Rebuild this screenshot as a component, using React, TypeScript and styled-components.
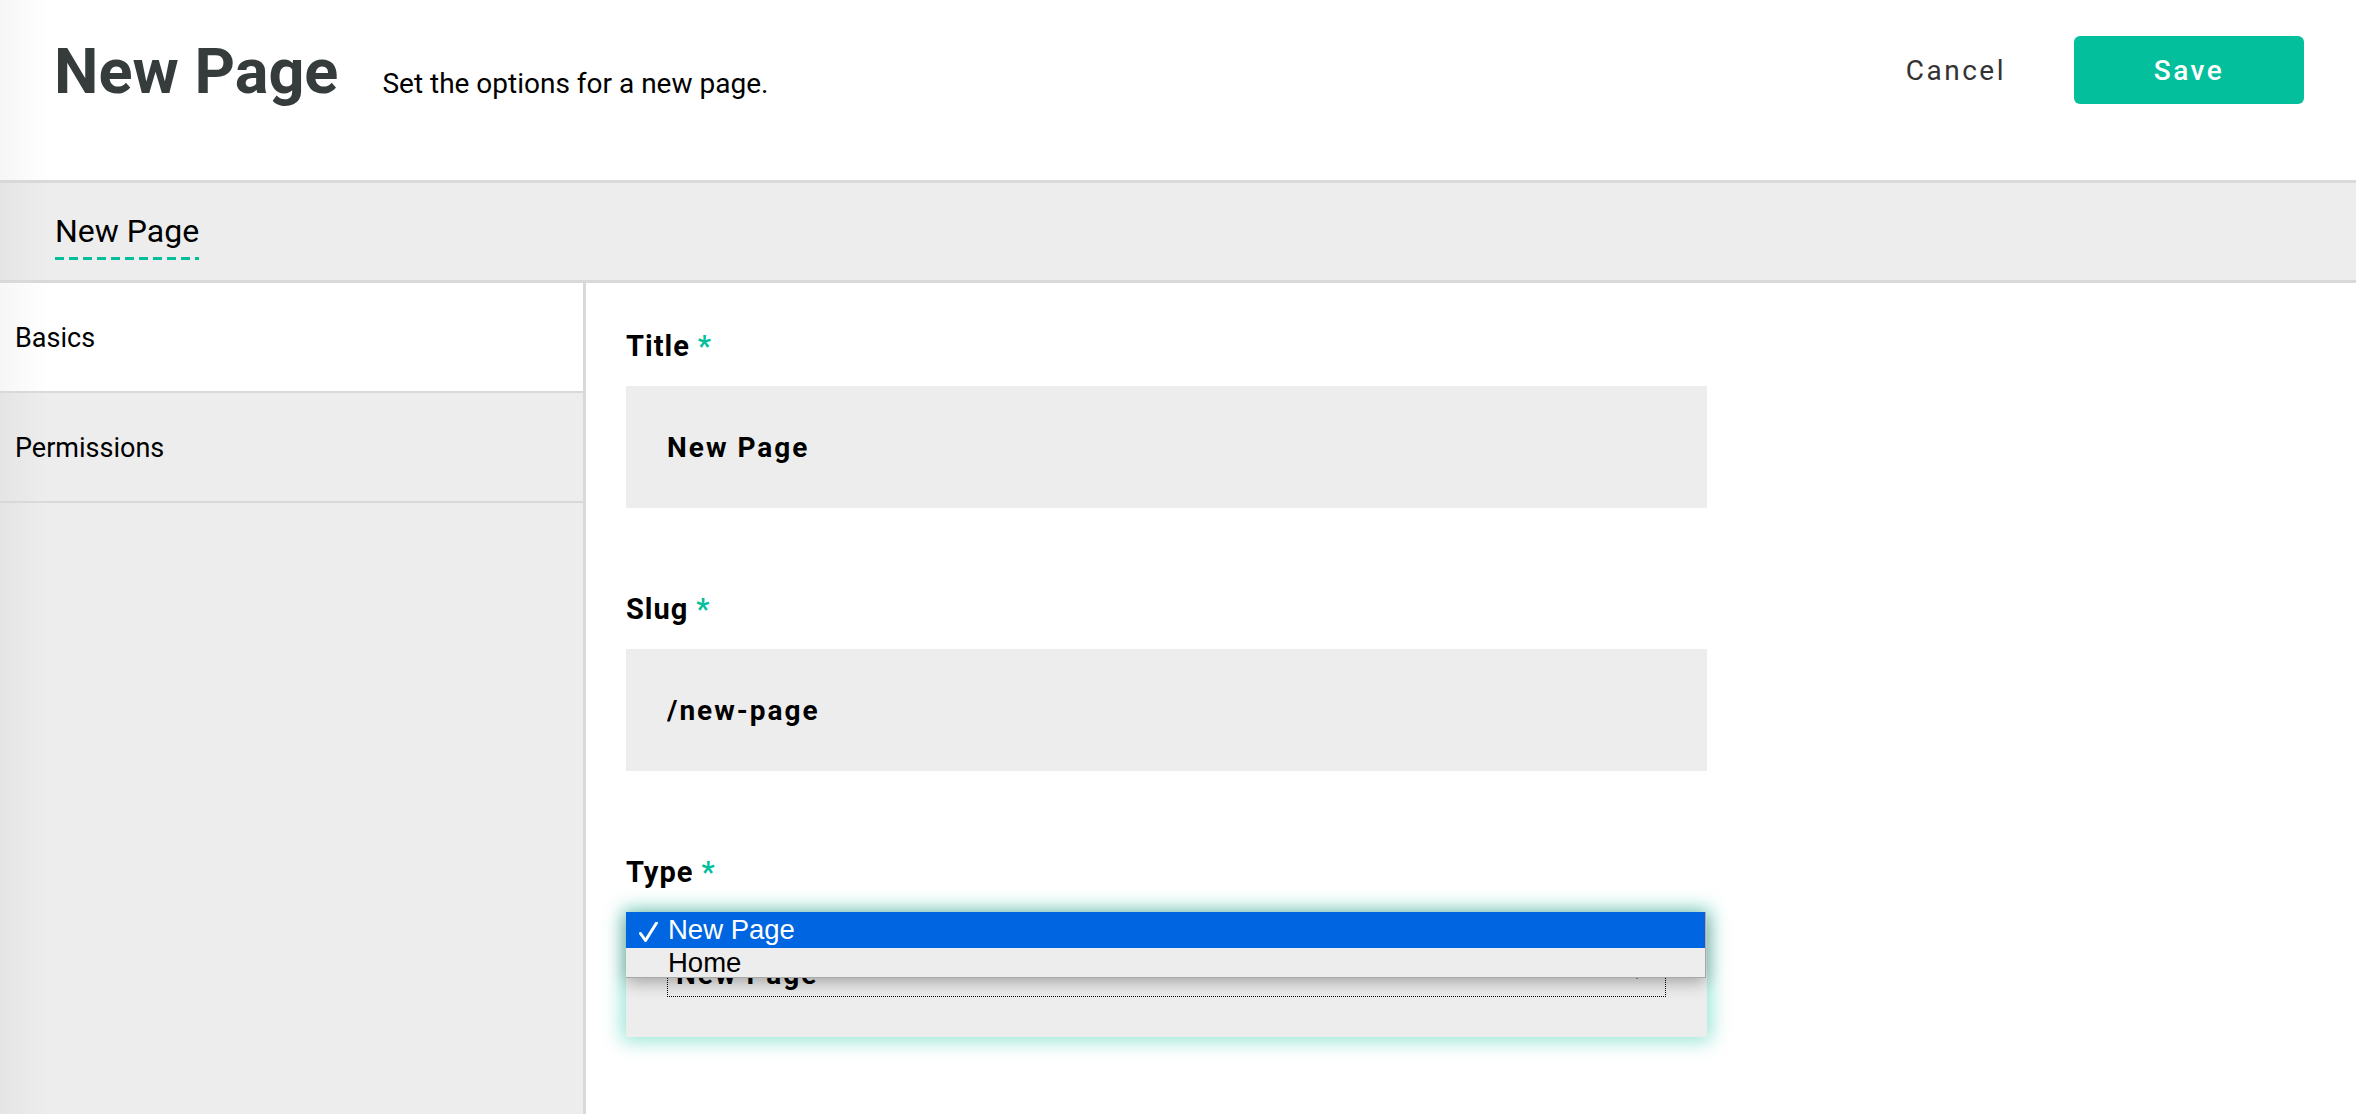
import React from "react";
import styled, { createGlobalStyle } from "styled-components";

const TEAL = "#03bf9b";
const GRAY = "#ededed";
const LINE = "#d9d9d9";
const EDGE = "linear-gradient(to right, rgba(0, 0, 0, 0.035), rgba(0, 0, 0, 0) 48px)";

const GlobalStyle = createGlobalStyle`
  html, body {
    margin: 0;
    padding: 0;
  }
  body {
    font-family: Roboto, "Liberation Sans", sans-serif;
    color: #000;
    background: #fff;
  }
  * {
    box-sizing: border-box;
  }
`;

const Page = styled.div`
  display: flex;
  flex-direction: column;
  min-height: 100vh;
`;

const Header = styled.header`
  display: flex;
  justify-content: space-between;
  align-items: flex-start;
  height: 183px;
  padding: 36px 52px 0 54px;
  border-bottom: 3px solid ${LINE};
  background: ${EDGE}, #fff;
`;

const TitleGroup = styled.div`
  display: flex;
  align-items: baseline;
  gap: 44px;
  margin-top: 2px;
`;

const PageTitle = styled.h1`
  margin: 0;
  font-size: 63px;
  line-height: 68px;
  font-weight: 700;
  color: #363b3b;
`;

const Subtitle = styled.p`
  margin: 0;
  font-size: 28px;
  color: #000;
`;

const Actions = styled.div`
  display: flex;
  align-items: center;
  gap: 68px;
  height: 68px;
`;

const CancelButton = styled.button`
  padding: 0;
  border: none;
  background: none;
  font-family: Roboto, "Liberation Sans", sans-serif;
  font-size: 28px;
  letter-spacing: 2.5px;
  color: #333;
`;

const SaveButton = styled.button`
  width: 230px;
  height: 68px;
  border: none;
  border-radius: 6px;
  background: ${TEAL};
  color: #fff;
  font-family: Roboto, "Liberation Sans", sans-serif;
  font-size: 28px;
  font-weight: 500;
  letter-spacing: 2.5px;
`;

const TabBar = styled.nav`
  display: flex;
  align-items: flex-end;
  height: 100px;
  padding: 0 0 20px 55px;
  border-bottom: 3px solid ${LINE};
  background: ${EDGE}, ${GRAY};
`;

const Tab = styled.div`
  font-size: 32px;
  padding-bottom: 10px;
  background-image: repeating-linear-gradient(
    to right,
    ${TEAL} 0 9px,
    transparent 9px 14px
  );
  background-size: 100% 3px;
  background-position: left bottom;
  background-repeat: no-repeat;
`;

const Body = styled.div`
  display: flex;
  flex: 1;
`;

const Sidebar = styled.aside`
  width: 586px;
  flex-shrink: 0;
  border-right: 3px solid ${LINE};
  background: ${EDGE}, ${GRAY};
`;

const SideItem = styled.div<{ $active?: boolean }>`
  display: flex;
  align-items: center;
  height: 110px;
  padding: 2px 0 0 15px;
  border-bottom: 2px solid ${LINE};
  font-size: 27px;
  background: ${(p) => (p.$active ? `${EDGE}, #fff` : "transparent")};
`;

const Content = styled.main`
  flex: 1;
  padding: 46px 40px;
`;

const Field = styled.div`
  margin-bottom: 84px;
`;

const Label = styled.label`
  display: block;
  margin-bottom: 23px;
  font-size: 29px;
  font-weight: 700;
  letter-spacing: 1px;
`;

const Required = styled.span`
  color: ${TEAL};
  margin-left: 8px;
`;

const TextInput = styled.input`
  display: block;
  width: 1081px;
  height: 122px;
  padding: 0 41px;
  border: none;
  outline: none;
  background: ${GRAY};
  font-family: Roboto, "Liberation Sans", sans-serif;
  font-size: 28px;
  font-weight: 700;
  letter-spacing: 2px;
  color: #000;
`;

const SelectWrap = styled.div`
  position: relative;
  width: 1081px;
  padding: 40px 41px;
  background: ${GRAY};
  box-shadow: 0 0 18px 4px rgba(3, 191, 155, 0.42);
`;

const SelectBox = styled.div`
  display: flex;
  align-items: center;
  justify-content: space-between;
  height: 45px;
  padding: 0 22px 0 8px;
  border: 1px dotted #000;
  font-size: 28px;
  font-weight: 700;
  letter-spacing: 2px;
`;

const Menu = styled.ul`
  position: absolute;
  top: 0;
  left: 0;
  width: 1080px;
  margin: 0;
  padding: 0;
  list-style: none;
  background: ${GRAY};
  border-right: 1px solid #a8a8a8;
  border-bottom: 1px solid #a8a8a8;
  box-shadow: 0 4px 16px rgba(0, 0, 0, 0.32);
  font-family: "Liberation Sans", Arial, sans-serif;
  font-size: 27.5px;
`;

const Option = styled.li<{ $selected?: boolean }>`
  display: flex;
  align-items: center;
  height: ${(p) => (p.$selected ? "36px" : "29px")};
  padding-left: 13px;
  background: ${(p) => (p.$selected ? "#0065e1" : "transparent")};
  color: ${(p) => (p.$selected ? "#fff" : "#000")};
`;

const Check = styled.span`
  display: flex;
  align-items: center;
  width: 29px;
  padding-top: 3px;
`;

const CheckIcon = () => (
  <svg width="19" height="20" viewBox="0 0 19 20">
    <path
      d="M1.5 11.5 L6.5 18.5 L17.5 1"
      fill="none"
      stroke="#fff"
      strokeWidth="3"
      strokeLinecap="round"
      strokeLinejoin="round"
    />
  </svg>
);

const fields = [
  { label: "Title", value: "New Page" },
  { label: "Slug", value: "/new-page" },
];

const types = ["New Page", "Home"];

export default function App() {
  return (
    <>
      <GlobalStyle />
      <Page>
        <Header>
          <TitleGroup>
            <PageTitle>New Page</PageTitle>
            <Subtitle>Set the options for a new page.</Subtitle>
          </TitleGroup>
          <Actions>
            <CancelButton>Cancel</CancelButton>
            <SaveButton>Save</SaveButton>
          </Actions>
        </Header>
        <TabBar>
          <Tab>New Page</Tab>
        </TabBar>
        <Body>
          <Sidebar>
            <SideItem $active>Basics</SideItem>
            <SideItem>Permissions</SideItem>
          </Sidebar>
          <Content>
            {fields.map((f) => (
              <Field key={f.label}>
                <Label>
                  {f.label}
                  <Required>*</Required>
                </Label>
                <TextInput readOnly value={f.value} />
              </Field>
            ))}
            <Field>
              <Label>
                Type
                <Required>*</Required>
              </Label>
              <SelectWrap>
                <SelectBox>
                  <span>New Page</span>
                  <svg width="12" height="8" viewBox="0 0 12 8">
                    <path d="M0 0h12L6 8z" fill="#000" />
                  </svg>
                </SelectBox>
                <Menu>
                  {types.map((t, i) => (
                    <Option key={t} $selected={i === 0}>
                      <Check>{i === 0 && <CheckIcon />}</Check>
                      {t}
                    </Option>
                  ))}
                </Menu>
              </SelectWrap>
            </Field>
          </Content>
        </Body>
      </Page>
    </>
  );
}
